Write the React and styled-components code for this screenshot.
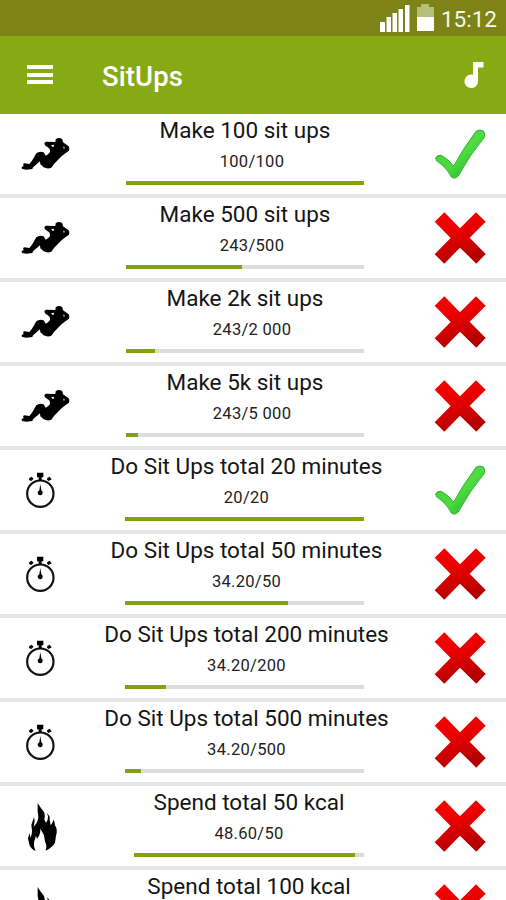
import styled, { createGlobalStyle } from "styled-components";

const GlobalStyle = createGlobalStyle`
  * {
    box-sizing: border-box;
  }
  body {
    margin: 0;
    background: #fff;
    font-family: Roboto, "Noto Sans", sans-serif;
  }
`;

const goals = [
  { type: "situp", title: "Make 100 sit ups", text: "100/100", percent: 100, done: true },
  { type: "situp", title: "Make 500 sit ups", text: "243/500", percent: 48.6 },
  { type: "situp", title: "Make 2k sit ups", text: "243/2 000", percent: 12.15 },
  { type: "situp", title: "Make 5k sit ups", text: "243/5 000", percent: 4.86 },
  { type: "time", title: "Do Sit Ups total 20 minutes", text: "20/20", percent: 100, done: true },
  { type: "time", title: "Do Sit Ups total 50 minutes", text: "34.20/50", percent: 68.4 },
  { type: "time", title: "Do Sit Ups total 200 minutes", text: "34.20/200", percent: 17.1 },
  { type: "time", title: "Do Sit Ups total 500 minutes", text: "34.20/500", percent: 6.84 },
  { type: "kcal", title: "Spend total 50 kcal", text: "48.60/50", percent: 96 },
  { type: "kcal", title: "Spend total 100 kcal" },
];

// left edge of the progress bar, offsets of the title and the counter for each type
const layout = {
  situp: { start: 126, titleShift: 0, shift: 14 },
  time: { start: 125, titleShift: 4, shift: 4 },
  kcal: { start: 134, titleShift: 0, shift: 0 },
};

const SitUpIcon = () => (
  <TypeSvg viewBox="0 0 210 180">
    <path d="M36 132 L35 126 L41 123 L39 117 L44 115 L58 117 L66 107 L79 85 Q88 77 101 82 L107 92 L114 88 L120 81 L119 71 L105 61 L103 54 L108 50 L136 51 L137 43 Q147 35 157 43 L159 52 L176 64 Q181 71 177 77 L164 86 L153 95 L132 117 L124 128 Q113 133 101 127 L91 118 L90 109 L69 127 L67 132 L49 134 Z" />
    <path d="M123 60 L131 59 L133 64 L128 66 Z M160 64 L165 69 L161 71 Z" fill="#fff" />
  </TypeSvg>
);

const StopwatchIcon = () => (
  <TypeSvg viewBox="0 3 210 180">
    <circle cx="91" cy="101" r="39.5" fill="none" stroke="#111" strokeWidth="6.5" />
    <path d="M81 38 H100 V52 H95 V62 H86 V52 H81 Z" />
    <path d="M58 54 L65 50 L71 56 L64 63 L57 60 Z M112 54 L119 50 L125 58 L116 63 L111 59 Z" />
    <path d="M91 72 L94 91 Q99 94 98 99 Q97 106 91 106 Q84 106 83 99 Q82 94 88 91 Z" />
  </TypeSvg>
);

const FlameIcon = () => (
  <TypeSvg viewBox="0 6 210 180">
    <path d="M83 24 Q92 39 100 48 Q107 58 103 74 L108 83 Q115 75 114 64 L111 55 Q121 63 119 75 L122 91 Q128 84 130 74 Q136 81 135 91 Q144 105 138 122 L135 143 Q128 156 107 167 Q112 151 105 141 L102 121 Q98 113 91 101 Q92 119 81 131 L78 122 L73 139 Q69 151 77 168 Q61 163 57 145 L54 130 L59 114 L61 129 Q67 118 66 107 L64 90 L72 66 L74 79 L71 95 L80 84 Q88 68 83 52 Z" />
    <path d="M88 124 L91 139 L95 129 L98 145 L104 137 L107 151 L99 164 L88 155 L81 160 L74 146 L82 136 Z" fill="#fff" />
  </TypeSvg>
);

const icons = { situp: SitUpIcon, time: StopwatchIcon, kcal: FlameIcon };

const CheckMark = () => (
  <StatusSvg viewBox="42 39 156 156">
    <defs>
      <linearGradient id="check" x1="0" y1="0" x2="1" y2="1">
        <stop offset="0" stopColor="#3fcf36" />
        <stop offset="0.52" stopColor="#4ddc41" />
        <stop offset="1" stopColor="#16a51a" />
      </linearGradient>
    </defs>
    <path
      d="M47 129 Q50 119 64 121 Q83 131 101 153 Q129 101 168 49 Q180 41 190 48 Q197 56 193 67 Q148 122 115 183 Q104 194 94 186 Q78 155 50 138 Z"
      fill="url(#check)"
      stroke="#26a728"
      strokeWidth="2.5"
    />
  </StatusSvg>
);

const CrossMark = () => (
  <StatusSvg viewBox="0 0 156 156">
    <defs>
      <linearGradient id="cross" x1="0" y1="0" x2="0.3" y2="1">
        <stop offset="0" stopColor="#ff0000" />
        <stop offset="0.5" stopColor="#e60000" />
        <stop offset="1" stopColor="#b30000" />
      </linearGradient>
    </defs>
    <path
      d="M31 1 L78 49 L126 1 L155 29 L107 77 L155 126 L127 155 L78 107 L31 155 L2 127 L50 78 L2 29 Z"
      fill="url(#cross)"
    />
  </StatusSvg>
);

const GoalRow = ({ goal }) => {
  const { type, title, text, percent, done } = goal;
  const Icon = icons[type];
  const { start, titleShift, shift } = layout[type];

  return (
    <Row $start={start}>
      <IconCell>
        <Icon />
      </IconCell>
      <Info>
        <Title $shift={titleShift}>{title}</Title>
        {text && (
          <>
            <Counter $shift={shift}>{text}</Counter>
            <Track>
              <Progress style={{ width: `${percent}%` }} />
            </Track>
          </>
        )}
      </Info>
      <StatusCell>{done ? <CheckMark /> : <CrossMark />}</StatusCell>
    </Row>
  );
};

const App = () => {
  return (
    <Screen>
      <GlobalStyle />
      <StatusBar>
        <svg width="30" height="28" viewBox="0 0 30 28" fill="#fff">
          <path d="M0 18h5v10H0z M6.5 13h4.5v15H6.5z M12.5 9H17v19h-4.500z M18.500 5H23v23h-4.500z M25 1h4.500v27H25z" />
        </svg>
        <svg width="17" height="27" viewBox="0 0 17 27">
          <path d="M4 0h8v3h5v10H0V3h4z" fill="#b6be7c" />
          <path d="M0 13h17v14H0z" fill="#fff" />
        </svg>
        <Clock>15:12</Clock>
      </StatusBar>
      <AppBar>
        <MenuButton>
          <MenuLine />
          <MenuLine />
          <MenuLine />
        </MenuButton>
        <AppTitle>SitUps</AppTitle>
        <svg width="20" height="27" viewBox="0 0 20 27" fill="#fff">
          <path d="M9 0h10.500v5.500H14V19a6.800 6.800 0 1 1-5-6.300z" />
        </svg>
      </AppBar>
      <List>
        {goals.map((goal) => (
          <GoalRow key={goal.title} goal={goal} />
        ))}
      </List>
    </Screen>
  );
};
export default App;

const Screen = styled.div`
  width: 506px;
  height: 900px;
  display: flex;
  flex-direction: column;
  overflow: hidden;
  background: #fff;
`;
const StatusBar = styled.header`
  flex: none;
  height: 36px;
  padding: 4px 9px 0 0;
  display: flex;
  justify-content: flex-end;
  align-items: flex-start;
  gap: 7px;
  background: #7d8317;
`;
const Clock = styled.span`
  font-size: 22.5px;
  line-height: 31px;
  color: #f8f8ea;
`;
const AppBar = styled.nav`
  flex: none;
  height: 78px;
  padding: 0 22px 0 27px;
  display: flex;
  align-items: center;
  background: #87aa14;
`;
const MenuButton = styled.div`
  width: 26px;
  margin-bottom: 1px;
  display: flex;
  flex-direction: column;
  gap: 3.5px;
`;
const MenuLine = styled.span`
  height: 4px;
  background: #fff;
`;
const AppTitle = styled.h1`
  flex: 1;
  margin: 3px 0 0 49px;
  font-size: 27.5px;
  font-weight: 500;
  line-height: 32px;
  letter-spacing: 0.1px;
  color: #fff;
`;
const List = styled.main`
  flex: none;
`;
const Row = styled.section`
  height: 84px;
  display: grid;
  grid-template-columns: ${(props) => props.$start}px minmax(0, 1fr) 142px;
  border-bottom: 4px solid #e6e6e6;
`;
const IconCell = styled.div`
  padding: 11px 0 0 10px;
`;
const TypeSvg = styled.svg`
  display: block;
  width: 70px;
  height: 60px;
  fill: #000;
`;
const Info = styled.div`
  display: flex;
  flex-direction: column;
  align-items: center;
`;
const Title = styled.div`
  height: 34px;
  padding-left: ${(props) => props.$shift}px;
  font-size: 22.5px;
  line-height: 33px;
  white-space: nowrap;
  color: #151515;
`;
const Counter = styled.div`
  height: 26px;
  padding-left: ${(props) => props.$shift}px;
  font-size: 16.5px;
  line-height: 27px;
  letter-spacing: 0.3px;
  white-space: nowrap;
  color: #222;
`;
const Track = styled.div`
  width: 100%;
  height: 4px;
  margin-top: 7px;
  background: #dcdcdc;
`;
const Progress = styled.div`
  height: 100%;
  background: #82a30f;
`;
const StatusCell = styled.div`
  padding: 14px 0 0 70px;
`;
const StatusSvg = styled.svg`
  display: block;
  width: 52px;
  height: 52px;
`;
